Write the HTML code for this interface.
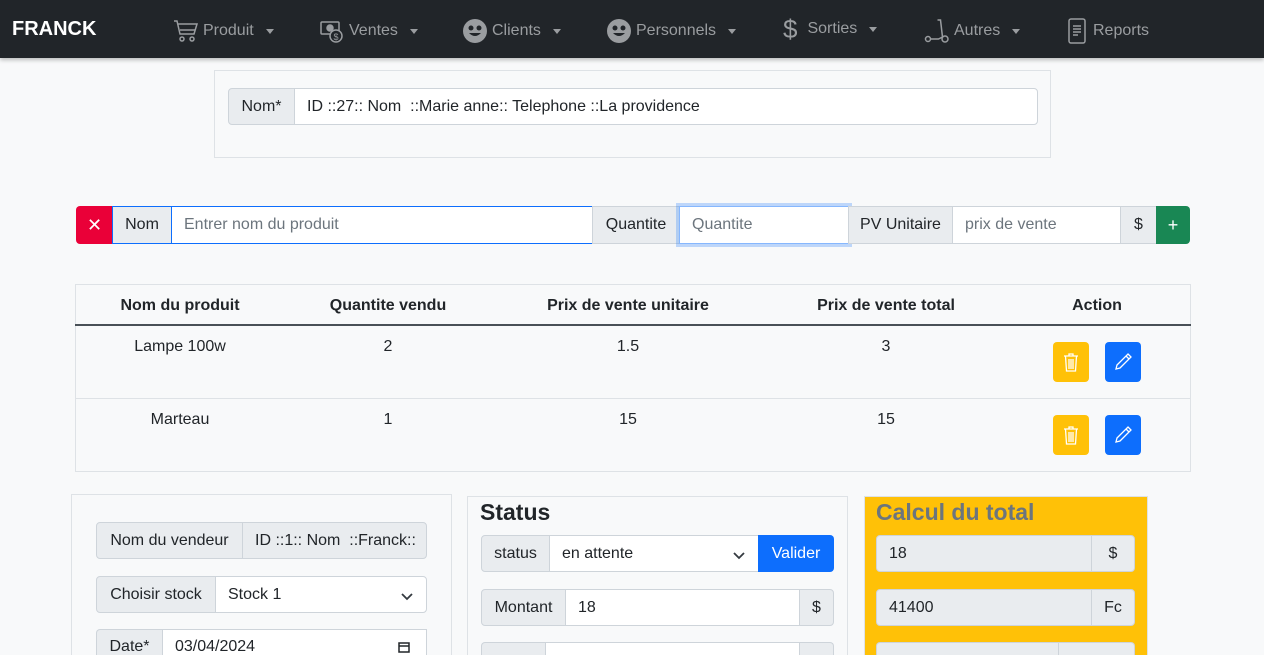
<!DOCTYPE html>
<html><head><meta charset="utf-8"><style>
*{box-sizing:border-box;margin:0;padding:0}
html{width:1264px;height:655px;overflow:hidden}
body{width:1264px;height:655px;overflow:hidden;background:#f8f9fa;font-family:"Liberation Sans",Arial,sans-serif;font-size:16px;color:#212529;position:relative}
.nav{position:absolute;left:0;top:0;width:1264px;height:58px;background:#212529;box-shadow:0 2px 4px rgba(0,0,0,.25);z-index:2}
.nav .brand{position:absolute;left:12px;top:18px;color:#fff;font-size:20px;font-weight:bold}
.ni{position:absolute;top:18px;color:#9a9da0;font-size:16px;display:flex;align-items:center;gap:4px;white-space:nowrap}
.caret{display:inline-block;width:0;height:0;border-left:4px solid transparent;border-right:4px solid transparent;border-top:5px solid #9a9da0;margin-left:8px}
.a{position:absolute}
.lbl{position:absolute;background:#e9ecef;border:1px solid #ced4da;display:flex;align-items:center;justify-content:center;font-size:16px;color:#212529;white-space:nowrap}
.inp{position:absolute;background:#fff;border:1px solid #ced4da;display:flex;align-items:center;padding-left:12px;font-size:16px;white-space:nowrap;overflow:hidden}
.ph{color:#6c757d}
.card{position:absolute;border:1px solid #dee2e6;border-bottom:none;background:#f8f9fa}
.th{position:absolute;top:297px;font-weight:bold;color:#212529;font-size:16px;transform:translateX(-50%);white-space:nowrap}
.td{position:absolute;transform:translateX(-50%);white-space:nowrap}
.btn{position:absolute;border-radius:4px;display:flex;align-items:center;justify-content:center}
.chev{position:absolute;right:12px;top:12px}
.cut{border-bottom:none!important}
</style></head><body>
<div class="nav">
<div class="brand">FRANCK</div>
<div class="ni" style="left:173px"><svg width="26" height="26" viewBox="0 0 26 26" fill="none" stroke="#9a9da0" stroke-width="1.5"><path d="M1 3h3l3 13h14l3-10H5"/><circle cx="9" cy="21" r="2"/><circle cx="19" cy="21" r="2"/><path d="M7 12h15"/></svg>Produit<span class="caret"></span></div>
<div class="ni" style="left:319px"><svg width="26" height="26" viewBox="0 0 26 26" fill="none" stroke="#9a9da0" stroke-width="1.5"><rect x="2" y="4" width="18" height="12" rx="1"/><circle cx="11" cy="10" r="3" fill="#9a9da0"/><circle cx="17" cy="18" r="6" fill="#212529"/><text x="14.5" y="22" font-size="9" fill="#9a9da0" stroke="none">$</text></svg>Ventes<span class="caret"></span></div>
<div class="ni" style="left:462px"><svg width="26" height="26" viewBox="0 0 26 26"><circle cx="13" cy="13" r="12" fill="#9a9da0"/><circle cx="9" cy="10" r="2.5" fill="#212529"/><circle cx="17" cy="10" r="2.5" fill="#212529"/><path d="M7 15q6 6 12 0z" fill="#212529"/></svg>Clients<span class="caret"></span></div>
<div class="ni" style="left:606px"><svg width="26" height="26" viewBox="0 0 26 26"><circle cx="13" cy="13" r="12" fill="#9a9da0"/><circle cx="9" cy="10" r="2.5" fill="#212529"/><circle cx="17" cy="10" r="2.5" fill="#212529"/><path d="M7 15q6 6 12 0z" fill="#212529"/></svg>Personnels<span class="caret"></span></div>
<div class="ni" style="left:783px;top:16px"><span style="font-size:26px;margin-right:6px;line-height:26px">$</span>Sorties<span class="caret"></span></div>
<div class="ni" style="left:924px"><svg width="26" height="26" viewBox="0 0 26 26" fill="none" stroke="#9a9da0" stroke-width="1.5"><circle cx="4" cy="21" r="2.5"/><circle cx="21" cy="21" r="3"/><path d="M6.5 21h8l4-2-2-17h-3"/></svg>Autres<span class="caret"></span></div>
<div class="ni" style="left:1067px"><svg width="22" height="26" viewBox="0 0 22 26" fill="none" stroke="#9a9da0" stroke-width="1.5"><rect x="2" y="1" width="16" height="24" rx="2"/><path d="M6 8h8M6 11h8M6 14h8M6 17h5"/></svg>Reports</div>
</div>

<div class="a" style="left:214px;top:70px;width:837px;height:88px;border:1px solid #dee2e6"></div>
<div class="lbl" style="left:228px;top:88px;width:67px;height:37px;border-radius:4px 0 0 4px">Nom*</div>
<div class="inp" style="left:294px;top:88px;width:744px;height:37px;border-radius:0 4px 4px 0">ID ::27:: Nom &nbsp;::Marie anne:: Telephone ::La providence</div>

<div class="btn" style="left:76px;top:206px;width:37px;height:38px;background:#ea0038;border-radius:4px 0 0 4px;color:#fff;font-size:18px">✕</div>
<div class="lbl" style="left:112px;top:206px;width:60px;height:38px;border-color:#0d6efd">Nom</div>
<div class="inp" style="left:171px;top:206px;width:422px;height:38px;border-color:#0d6efd"><span class="ph">Entrer nom du produit</span></div>
<div class="lbl" style="left:592px;top:206px;width:88px;height:38px">Quantite</div>
<div class="inp" style="left:679px;top:206px;width:170px;height:38px;border-color:#86b7fe;box-shadow:0 0 0 3px rgba(13,110,253,.25)"><span class="ph">Quantite</span></div>
<div class="lbl" style="left:848px;top:206px;width:105px;height:38px">PV Unitaire</div>
<div class="inp" style="left:952px;top:206px;width:169px;height:38px"><span class="ph">prix de vente</span></div>
<div class="lbl" style="left:1120px;top:206px;width:37px;height:38px">$</div>
<div class="btn" style="left:1156px;top:206px;width:34px;height:38px;background:#198754;border-radius:0 4px 4px 0;color:#fff;font-size:18px">+</div>

<div class="a" style="left:75px;top:284px;width:1116px;height:188px;border:1px solid #dee2e6"></div>
<div class="a" style="left:75px;top:324px;width:1116px;height:2px;background:#495057"></div>
<div class="a" style="left:75px;top:398px;width:1116px;height:1px;background:#dee2e6"></div>
<div class="th" style="left:180px">Nom du produit</div>
<div class="th" style="left:388px">Quantite vendu</div>
<div class="th" style="left:628px">Prix de vente unitaire</div>
<div class="th" style="left:886px">Prix de vente total</div>
<div class="th" style="left:1097px">Action</div>
<div class="td" style="left:180px;top:338px">Lampe 100w</div>
<div class="td" style="left:388px;top:338px">2</div>
<div class="td" style="left:628px;top:338px">1.5</div>
<div class="td" style="left:886px;top:338px">3</div>
<div class="td" style="left:180px;top:411px">Marteau</div>
<div class="td" style="left:388px;top:411px">1</div>
<div class="td" style="left:628px;top:411px">15</div>
<div class="td" style="left:886px;top:411px">15</div>
<div class="btn" style="left:1053px;top:342px;width:36px;height:40px;background:#ffc107"><svg width="18" height="20" viewBox="0 0 18 20" fill="none" stroke="#fff" stroke-width="1.3"><path d="M2 4h14M7 4V2h4v2M3.5 4l1 15h9l1-15M7 7v10M9 7v10M11 7v10"/></svg></div>
<div class="btn" style="left:1105px;top:342px;width:36px;height:40px;background:#0d6efd"><svg width="20" height="20" viewBox="0 0 20 20" fill="none" stroke="#fff" stroke-width="1.3"><path d="M15 2l3 3L7 16l-4 1 1-4z M13 4l3 3"/></svg></div>
<div class="btn" style="left:1053px;top:415px;width:36px;height:40px;background:#ffc107"><svg width="18" height="20" viewBox="0 0 18 20" fill="none" stroke="#fff" stroke-width="1.3"><path d="M2 4h14M7 4V2h4v2M3.5 4l1 15h9l1-15M7 7v10M9 7v10M11 7v10"/></svg></div>
<div class="btn" style="left:1105px;top:415px;width:36px;height:40px;background:#0d6efd"><svg width="20" height="20" viewBox="0 0 20 20" fill="none" stroke="#fff" stroke-width="1.3"><path d="M15 2l3 3L7 16l-4 1 1-4z M13 4l3 3"/></svg></div>

<div class="card" style="left:71px;top:494px;width:381px;height:161px"></div>
<div class="lbl" style="left:96px;top:522px;width:147px;height:37px;border-radius:4px 0 0 4px">Nom du vendeur</div>
<div class="inp" style="left:242px;top:522px;width:185px;height:37px;background:#e9ecef;border-radius:0 4px 4px 0">ID ::1:: Nom &nbsp;::Franck::</div>
<div class="lbl" style="left:96px;top:576px;width:120px;height:37px;border-radius:4px 0 0 4px">Choisir stock</div>
<div class="inp" style="left:215px;top:576px;width:212px;height:37px;border-radius:0 4px 4px 0">Stock 1<svg class="chev" width="14" height="14" viewBox="0 0 14 14" fill="none" stroke="#343a40" stroke-width="1.8"><path d="M2 5l5 5 5-5"/></svg></div>
<div class="lbl cut" style="left:96px;top:629px;width:67px;height:26px;border-radius:4px 0 0 0;align-items:flex-start;padding-top:8px">Date*</div>
<div class="inp cut" style="left:162px;top:629px;width:265px;height:26px;align-items:flex-start;padding-top:8px">03/04/2024<svg style="position:absolute;right:16px;top:11px" width="12" height="12" viewBox="0 0 12 12" fill="none" stroke="#212529" stroke-width="1.5"><rect x="1" y="2" width="10" height="9"/><path d="M1 5h10"/></svg></div>

<div class="card" style="left:467px;top:496px;width:381px;height:159px"></div>
<div class="a" style="left:480px;top:499px;font-size:23px;font-weight:bold">Status</div>
<div class="lbl" style="left:481px;top:535px;width:69px;height:37px;border-radius:4px 0 0 4px">status</div>
<div class="inp" style="left:549px;top:535px;width:210px;height:37px">en attente<svg class="chev" width="14" height="14" viewBox="0 0 14 14" fill="none" stroke="#343a40" stroke-width="1.8"><path d="M2 5l5 5 5-5"/></svg></div>
<div class="btn" style="left:758px;top:535px;width:76px;height:37px;background:#0d6efd;color:#fff;border-radius:0 4px 4px 0">Valider</div>
<div class="lbl" style="left:481px;top:589px;width:85px;height:37px;border-radius:4px 0 0 4px">Montant</div>
<div class="inp" style="left:565px;top:589px;width:235px;height:37px">18</div>
<div class="lbl" style="left:799px;top:589px;width:35px;height:37px;border-radius:0 4px 4px 0">$</div>
<div class="lbl cut" style="left:481px;top:642px;width:65px;height:13px;border-radius:4px 0 0 0"></div>
<div class="inp cut" style="left:545px;top:642px;width:255px;height:13px"></div>
<div class="lbl cut" style="left:799px;top:642px;width:35px;height:13px;border-radius:0 4px 0 0"></div>

<div class="card" style="left:864px;top:496px;width:284px;height:159px;background:#ffc107"></div>
<div class="a" style="left:876px;top:499px;font-size:23px;color:#6c757d;font-weight:bold">Calcul du total</div>
<div class="inp" style="left:876px;top:535px;width:216px;height:37px;background:#e9ecef;border-radius:4px 0 0 4px">18</div>
<div class="lbl" style="left:1091px;top:535px;width:44px;height:37px;border-radius:0 4px 4px 0">$</div>
<div class="inp" style="left:876px;top:589px;width:216px;height:37px;background:#e9ecef;border-radius:4px 0 0 4px">41400</div>
<div class="lbl" style="left:1091px;top:589px;width:44px;height:37px;border-radius:0 4px 4px 0">Fc</div>
<div class="inp cut" style="left:876px;top:642px;width:183px;height:13px;background:#e9ecef;border-radius:4px 0 0 0"></div>
<div class="lbl cut" style="left:1058px;top:642px;width:77px;height:13px;border-radius:0 4px 0 0"></div>
</body></html>
